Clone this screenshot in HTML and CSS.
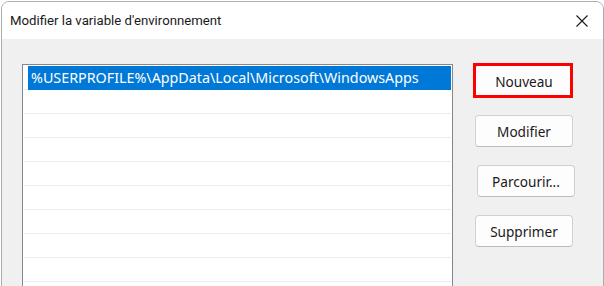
FILE: index.html
```html
<!DOCTYPE html>
<html lang="fr">
<head>
  <meta charset="UTF-8" />
  <title>Modifier la variable d'environnement</title>
  <link rel="stylesheet" href="styles.css">
</head>
<body>

  <div class="window">
    <div class="titlebar">
      <span class="title">Modifier la variable d'environnement</span>
      <span class="close">
        <svg width="12" height="12" viewBox="0 0 12 12">
          <path d="M0.5 0.5 L11.5 11.5 M11.5 0.5 L0.5 11.5" stroke="#1a1a1a" stroke-width="1.1" fill="none" />
        </svg>
      </span>
    </div>

    <div class="content">
      <div class="list">
        <div class="row"><span class="selected">%USERPROFILE%\AppData\Local\Microsoft\WindowsApps</span></div>
        <div class="row"></div>
        <div class="row"></div>
        <div class="row"></div>
        <div class="row"></div>
        <div class="row"></div>
        <div class="row"></div>
        <div class="row"></div>
        <div class="row"></div>
        <div class="row"></div>
      </div>

      <div class="actions">
        <button class="btn btn-marked">Nouveau</button>
        <button class="btn">Modifier</button>
        <button class="btn btn-shift">Parcourir...</button>
        <button class="btn">Supprimer</button>
      </div>
    </div>
  </div>

</body>
</html>
```

FILE: styles.css
```css
body {
  margin: 0;
  background-color: #fff;
  font-family: 'Noto Sans', sans-serif;
  color: #1a1a1a;
  overflow: hidden;
}

.window {
  margin: 1px 0 0 1px;
  width: 601px;
  height: 300px;
  border: 1px solid #adadad;
  border-radius: 8px 8px 0 0;
  background-color: #f0f0f0;
  overflow: hidden;
}

.titlebar {
  height: 37px;
  background-color: #fff;
  display: flex;
  align-items: center;
  justify-content: space-between;
  padding: 0 15px 0 8px;
}

.title {
  font-family: Roboto, sans-serif;
  font-size: 13.2px;
  margin-top: 0;
}

.close {
  display: flex;
  margin-top: 1px;
}

.content {
  display: flex;
  align-items: flex-start;
  padding: 25px 0 0 20px;
}

.list {
  width: 427px;
  height: 260px;
  border: 1px solid #828790;
  background-color: #fff;
  padding: 1px;
}

.row {
  height: 23px;
  border-bottom: 1px solid #ececec;
  display: flex;
}

.selected {
  margin-left: 4px;
  flex: 1;
  height: 24px;
  background-color: #0078d7;
  color: #fff;
  font-size: 14.3px;
  line-height: 23px;
  padding-left: 3px;
  white-space: nowrap;
}

.actions {
  display: flex;
  flex-direction: column;
  align-items: flex-start;
  gap: 18px;
  margin: 1px 0 0 22px;
}

.btn {
  position: relative;
  width: 98px;
  height: 32px;
  background-color: #fdfdfd;
  border: 1px solid #d0d0d0;
  border-bottom-color: #bcbcbc;
  border-radius: 4px;
  font-family: 'Noto Sans', sans-serif;
  font-size: 13.6px;
  color: #1a1a1a;
  padding: 0;
}

.btn-shift {
  margin-left: 2px;
}

.btn-marked::after {
  content: "";
  position: absolute;
  top: -3px;
  left: -3px;
  right: -1px;
  bottom: -2px;
  border: 3px solid #f00;
}
```
